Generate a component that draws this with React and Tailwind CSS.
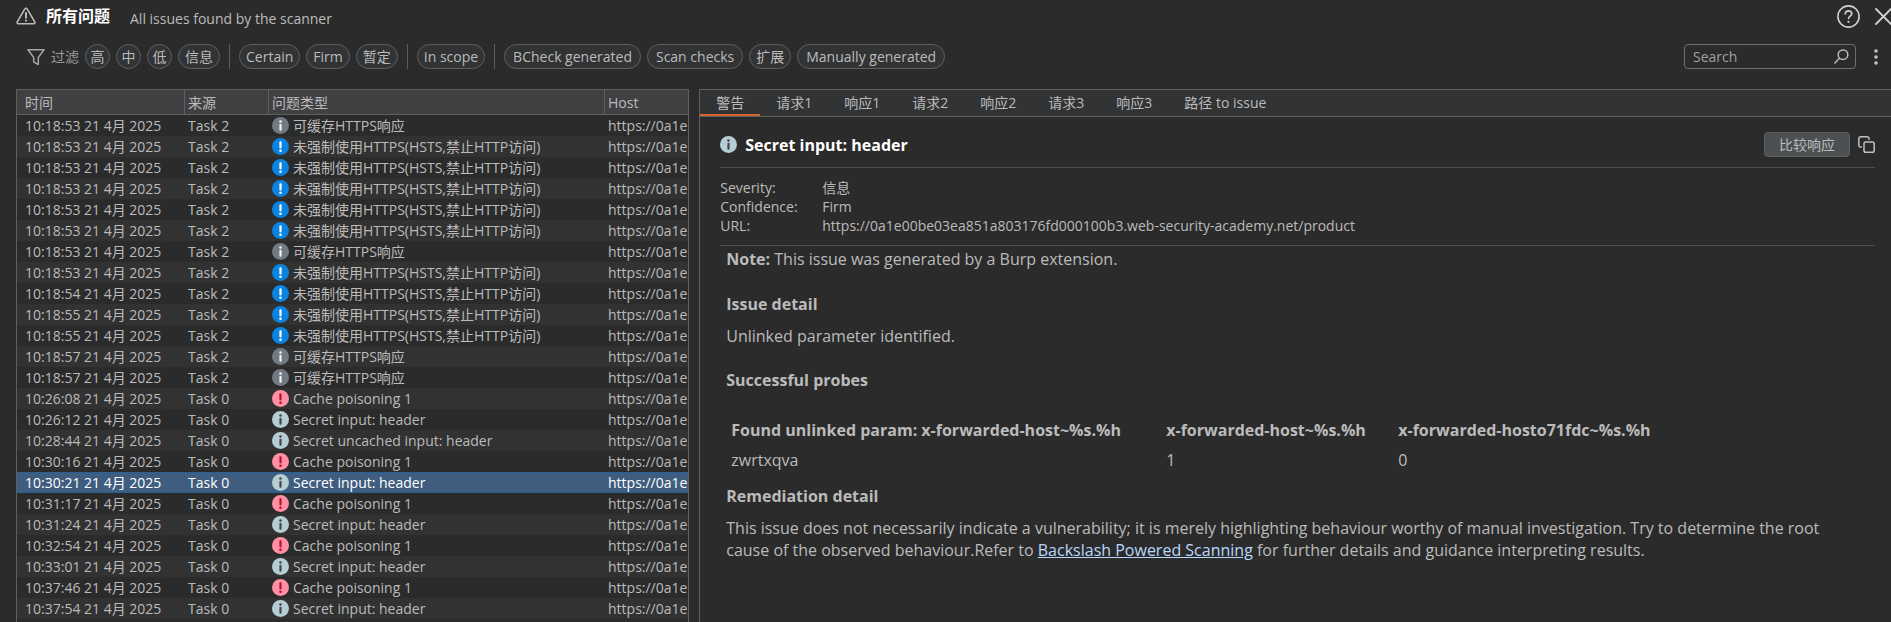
import React from "react";

const issues = [
  ["10:18:53", "Task 2", "muted", "可缓存HTTPS响应"],
  ["10:18:53", "Task 2", "low", "未强制使用HTTPS(HSTS,禁止HTTP访问)"],
  ["10:18:53", "Task 2", "low", "未强制使用HTTPS(HSTS,禁止HTTP访问)"],
  ["10:18:53", "Task 2", "low", "未强制使用HTTPS(HSTS,禁止HTTP访问)"],
  ["10:18:53", "Task 2", "low", "未强制使用HTTPS(HSTS,禁止HTTP访问)"],
  ["10:18:53", "Task 2", "low", "未强制使用HTTPS(HSTS,禁止HTTP访问)"],
  ["10:18:53", "Task 2", "muted", "可缓存HTTPS响应"],
  ["10:18:53", "Task 2", "low", "未强制使用HTTPS(HSTS,禁止HTTP访问)"],
  ["10:18:54", "Task 2", "low", "未强制使用HTTPS(HSTS,禁止HTTP访问)"],
  ["10:18:55", "Task 2", "low", "未强制使用HTTPS(HSTS,禁止HTTP访问)"],
  ["10:18:55", "Task 2", "low", "未强制使用HTTPS(HSTS,禁止HTTP访问)"],
  ["10:18:57", "Task 2", "muted", "可缓存HTTPS响应"],
  ["10:18:57", "Task 2", "muted", "可缓存HTTPS响应"],
  ["10:26:08", "Task 0", "high", "Cache poisoning 1"],
  ["10:26:12", "Task 0", "info", "Secret input: header"],
  ["10:28:44", "Task 0", "info", "Secret uncached input: header"],
  ["10:30:16", "Task 0", "high", "Cache poisoning 1"],
  ["10:30:21", "Task 0", "info", "Secret input: header"],
  ["10:31:17", "Task 0", "high", "Cache poisoning 1"],
  ["10:31:24", "Task 0", "info", "Secret input: header"],
  ["10:32:54", "Task 0", "high", "Cache poisoning 1"],
  ["10:33:01", "Task 0", "info", "Secret input: header"],
  ["10:37:46", "Task 0", "high", "Cache poisoning 1"],
  ["10:37:54", "Task 0", "info", "Secret input: header"],
];
const SELECTED = 17;

const filterGroups = [
  ["高", "中", "低", "信息"],
  ["Certain", "Firm", "暂定"],
  ["In scope"],
  ["BCheck generated", "Scan checks", "扩展", "Manually generated"],
];

const tabs = ["警告", "请求1", "响应1", "请求2", "响应2", "请求3", "响应3", "路径 to issue"];

const badgeColors = {
  muted: ["#727b84", "#f4f4f4"],
  low: ["#0a84e0", "#ffffff"],
  high: ["#ff8fa3", "#b3152f"],
  info: ["#b6cdd3", "#3f474b"],
};

function Badge({ kind }) {
  const [fill, mark] = badgeColors[kind];
  const bang = kind === "low" || kind === "high";
  return (
    <svg className="size-[17px] shrink-0" viewBox="0 0 17 17" aria-hidden="true">
      <circle cx="8.5" cy="8.5" r="8.5" fill={fill} />
      {bang ? (
        <g fill={mark}>
          <rect x="7.4" y="3.2" width="2.2" height="7.2" rx="1" />
          <circle cx="8.5" cy="12.7" r="1.3" />
        </g>
      ) : (
        <g fill={mark}>
          <circle cx="8.5" cy="4.5" r="1.3" />
          <rect x="7.4" y="6.8" width="2.2" height="7" rx="1" />
        </g>
      )}
    </svg>
  );
}

function TitleBar() {
  return (
    <header className="flex h-[34px] items-start pl-4">
      <svg className="mt-[7px] h-[18px] w-5 shrink-0" viewBox="0 0 20 18" fill="none" stroke="#bbbbbb" strokeLinecap="round" strokeLinejoin="round" aria-hidden="true">
        <path d="M8.9 1.8 1.2 15a1.2 1.2 0 0 0 1 1.8h15.6a1.2 1.2 0 0 0 1-1.8L11.1 1.8a1.25 1.25 0 0 0-2.2 0Z" strokeWidth="1.5" />
        <path d="M10 6v4.8M10 13.6v.2" strokeWidth="2" />
      </svg>
      <h1 className="ml-[10px] mt-1 text-base/6 font-bold text-white">所有问题</h1>
      <p className="ml-5 mt-[7px] text-sm/6">All issues found by the scanner</p>
      <div className="ml-auto flex shrink-0 items-start">
        <button type="button" aria-label="Help" className="mt-[5px] text-[#cfcfcf]">
          <svg className="size-[23px]" viewBox="0 0 23 23" fill="none" stroke="currentColor" strokeLinecap="round" strokeLinejoin="round" aria-hidden="true">
            <circle cx="11.5" cy="11.5" r="10.6" strokeWidth="1.6" />
            <path d="M8.3 8.8c.1-1.9 1.4-3 3.2-3 1.9 0 3.3 1.1 3.3 2.8 0 2.6-3.2 2.4-3.2 4.7" strokeWidth="1.7" />
            <circle cx="11.5" cy="16.8" r=".5" strokeWidth="1.3" />
          </svg>
        </button>
        <button type="button" aria-label="Close" className="ml-[15px] mt-2 w-4 overflow-hidden text-[#cfcfcf]">
          <svg className="h-[17px] w-[17px] max-w-none" viewBox="0 0 17 17" fill="none" stroke="currentColor" strokeWidth="1.9" strokeLinecap="round" aria-hidden="true">
            <path d="m1 1 15 15M16 1 1 16" />
          </svg>
        </button>
      </div>
    </header>
  );
}

function Pill({ label }) {
  const padding = label.length === 1 ? "w-[25px]" : label.length > 8 ? "px-2" : "px-[6px]";
  return (
    <button
      type="button"
      className={`h-[25px] whitespace-nowrap rounded-full border border-[#5e6060] bg-[#313335] ${padding}`}
    >
      {label}
    </button>
  );
}

function FilterBar() {
  return (
    <div className="mt-[10px] flex h-[25px] items-center pl-[27px]">
      <svg className="h-[18px] w-[18px] shrink-0" viewBox="0 0 18 18" fill="none" stroke="#a6a6a6" strokeWidth="1.5" strokeLinejoin="round" aria-hidden="true">
        <path d="M.9 1.8h16.2l-5.8 7.6v7.2l-4.6-2.7V9.4Z" />
      </svg>
      <span className="ml-[6px] whitespace-nowrap text-[#999999]">过滤</span>
      <div className="ml-[6px] flex h-full items-center">
        {filterGroups.map((group, i) => (
          <div
            key={i}
            className={
              i === 0
                ? "flex h-full gap-[6px]"
                : "ml-[9px] flex h-full gap-[6px] border-l border-[#5a5c5e] pl-[9px]"
            }
          >
            {group.map((label) => (
              <Pill key={label} label={label} />
            ))}
          </div>
        ))}
      </div>
      <div className="ml-auto flex h-[25px] w-[172px] shrink-0 items-center rounded border border-[#6b6d6f] pr-[6px]">
        <input
          aria-label="Search"
          placeholder="Search"
          className="h-full w-0 flex-1 bg-transparent pl-2 placeholder-[#a0a0a0] outline-none"
        />
        <svg className="size-[15px]" viewBox="0 0 15 15" fill="none" stroke="#bbbbbb" strokeWidth="1.5" strokeLinecap="round" aria-hidden="true">
          <circle cx="9" cy="5.7" r="4.8" />
          <path d="M5.5 9.3.9 14" />
        </svg>
      </div>
      <button type="button" aria-label="More options" className="ml-[18px] mr-[13px]">
        <svg className="h-4 w-1" viewBox="0 0 4 16" fill="#c4c4c4" aria-hidden="true">
          <circle cx="2" cy="2" r="1.8" />
          <circle cx="2" cy="8" r="1.8" />
          <circle cx="2" cy="14" r="1.8" />
        </svg>
      </button>
    </div>
  );
}

function IssueTable() {
  return (
    <section className="min-w-0 overflow-hidden border border-b-0 border-[#5e6060]">
      <table className="w-full table-fixed border-separate border-spacing-0 text-left">
        <colgroup>
          <col className="w-[168px]" />
          <col className="w-[84px]" />
          <col className="w-[336px]" />
          <col />
        </colgroup>
        <thead>
          <tr className="h-[25px] bg-[#414143]">
            <th className="border-b border-r border-[#5e6060] pb-0 pl-2 pt-[2px] font-normal">时间</th>
            <th className="border-b border-r border-[#5e6060] pb-0 pl-[3px] pt-[2px] font-normal">来源</th>
            <th className="border-b border-r border-[#5e6060] pb-0 pl-[3px] pt-[2px] font-normal">问题类型</th>
            <th className="border-b border-[#5e6060] pb-0 pl-[3px] pt-[2px] font-normal">Host</th>
          </tr>
        </thead>
        <tbody>
          {issues.map(([time, source, kind, name], i) => (
            <tr
              key={i}
              className={
                i === SELECTED
                  ? "h-[21px] bg-[#3f5d7f] text-white shadow-[inset_0_1px_#2a6197,inset_0_-1px_#2a6197]"
                  : "h-[21px] odd:bg-[#2b2b2b] even:bg-[#323232]"
              }
            >
              <td className="whitespace-nowrap py-0 pl-2">{time} 21 4月 2025</td>
              <td className="whitespace-nowrap py-0 pl-[3px]">{source}</td>
              <td className="py-0 pl-[3px]">
                <span className="flex items-center gap-1 whitespace-nowrap">
                  <Badge kind={kind} />
                  {name}
                </span>
              </td>
              <td className="overflow-hidden whitespace-nowrap py-0 pl-[3px]">https://0a1e</td>
            </tr>
          ))}
        </tbody>
      </table>
    </section>
  );
}

function Advisory() {
  return (
    <section className="min-w-0 border-l border-t border-[#5e6060]">
      <nav role="tablist" className="flex h-[27px] border-b border-[#5e6060] bg-[#313335]">
        {tabs.map((tab, i) => (
          <button
            key={tab}
            type="button"
            role="tab"
            aria-selected={i === 0}
            className={
              i === 0
                ? "h-[26px] border-b-2 border-[#d9632f] px-4 pt-[2px]"
                : "h-[26px] px-4"
            }
          >
            {tab}
          </button>
        ))}
      </nav>

      <div className="pl-5 pr-4">
        <div className="flex h-[51px] items-center border-b border-[#4d4f51] pt-[5px]">
          <Badge kind="info" />
          <h2 className="ml-2 text-base/6 font-bold text-white">Secret input: header</h2>
          <button
            type="button"
            className="ml-auto h-[25px] rounded border border-[#5e6060] bg-[#4c5052] px-[14px]"
          >
            比较响应
          </button>
          <button type="button" aria-label="Copy" className="ml-2">
            <svg className="size-[17px]" viewBox="0 0 17 17" fill="none" stroke="#c0c0c0" strokeWidth="1.5" strokeLinecap="round" aria-hidden="true">
              <rect x="6" y="6" width="10.2" height="10.2" rx="1.8" />
              <path d="M3.3 11H2.6A1.8 1.8 0 0 1 .8 9.2V2.6A1.8 1.8 0 0 1 2.6.8h6.6A1.8 1.8 0 0 1 11 2.6v.6" />
            </svg>
          </button>
        </div>
        <dl className="grid grid-cols-[102px_1fr] border-b border-[#4d4f51] pb-[10px] pt-[10px] leading-[19px]">
          <dt>Severity:</dt>
          <dd>信息</dd>
          <dt>Confidence:</dt>
          <dd>Firm</dd>
          <dt>URL:</dt>
          <dd>https://0a1e00be03ea851a803176fd000100b3.web-security-academy.net/product</dd>
        </dl>

        <article className="pl-[6px] pr-8 pt-[2px] text-base/[22px]">
          <p>
            <b>Note:</b> This issue was generated by a Burp extension.
          </p>
          <h3 className="mt-[23px] font-bold">Issue detail</h3>
          <p className="mt-[10px]">Unlinked parameter identified.</p>
          <h3 className="mt-[22px] font-bold">Successful probes</h3>
          <table className="mt-6 whitespace-nowrap text-left">
            <thead>
              <tr className="h-[30px]">
                <th className="min-w-[440px] pl-[5px] pr-8">Found unlinked param: x-forwarded-host~%s.%h</th>
                <th className="min-w-[232px] pr-5">x-forwarded-host~%s.%h</th>
                <th>x-forwarded-hosto71fdc~%s.%h</th>
              </tr>
            </thead>
            <tbody>
              <tr className="h-[30px]">
                <td className="pl-[5px]">zwrtxqva</td>
                <td>1</td>
                <td>0</td>
              </tr>
            </tbody>
          </table>
          <h3 className="mt-[10px] font-bold">Remediation detail</h3>
          <p className="mt-[10px]">
            This issue does not necessarily indicate a vulnerability; it is merely highlighting behaviour worthy of
            manual investigation. Try to determine the root cause of the observed behaviour.Refer to{" "}
            <a href="#backslash-powered-scanning" className="text-[#b8d8fb] underline">
              Backslash Powered Scanning
            </a>{" "}
            for further details and guidance interpreting results.
          </p>
        </article>
      </div>
    </section>
  );
}

export default function App() {
  return (
    <div className="flex min-h-screen flex-col overflow-hidden bg-[#2b2b2b] font-['Open_Sans','Noto_Sans_CJK_SC',sans-serif] text-sm/5 text-[#bbbbbb]">
      <TitleBar />
      <FilterBar />
      <main className="mt-5 grid flex-1 grid-cols-[361fr_639fr] gap-[10px] pl-4">
        <IssueTable />
        <Advisory />
      </main>
    </div>
  );
}
